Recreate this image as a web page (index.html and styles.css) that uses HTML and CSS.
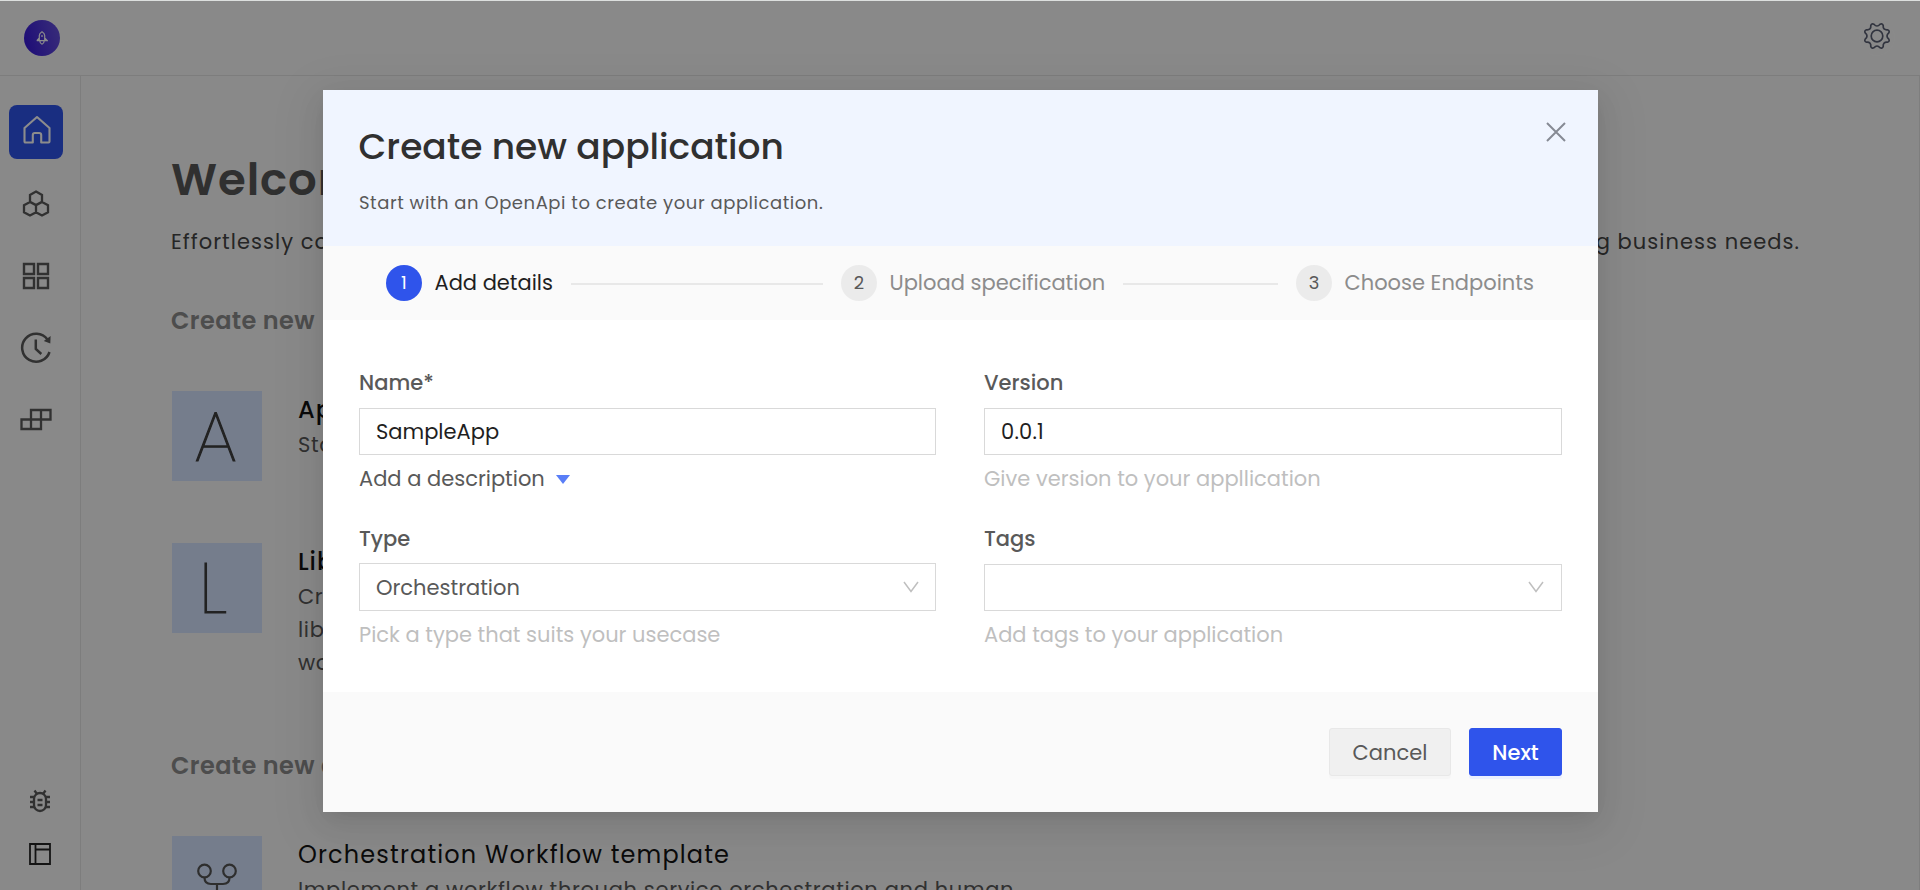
FILE: index.html
```html
<!DOCTYPE html>
<html lang="en">
<head>
<meta charset="utf-8">
<title>Create new application</title>
<link rel="stylesheet" href="styles.css">
</head>
<body>
<div class="app">
  <header class="topbar">
    <div class="brand">
      <svg width="12" height="14" viewBox="0 0 12 14" fill="none" stroke="#fff" stroke-width="1.2"><path d="M3.3 9.5V4.6C3.3 2.8 4.5 1.6 6 .8c1.500.8 2.700 2 2.700 3.800v4.900M.8 9.600h10.400L8.700 7M3.300 7 .8 9.600M3.800 10c.1 1.800.9 2.800 2.200 3.200 1.300-.4 2.100-1.400 2.200-3.200M6 4v2"/></svg>
    </div>
    <div class="settings">
      <svg width="28" height="28" viewBox="-14 -14 28 28" fill="none" stroke="#5a5f73" stroke-width="1.700" stroke-linejoin="round"><path d="M11.800 3.050Q13 5.400 10.500 6.200 5.800 5.800 6.200 10.500 5.400 13 3.050 11.800 0 8.200-3.050 11.800-5.400 13-6.200 10.500-5.800 5.800-10.500 6.200-13 5.400-11.800 3.050-8.200 0-11.800-3.050-13-5.400-10.500-6.200-5.800-5.800-6.200-10.500-5.400-13-3.050-11.800 0-8.200 3.050-11.800 5.400-13 6.200-10.500 5.800-5.800 10.500-6.200 13-5.400 11.800-3.050 8.200 0 11.800 3.050Z"/><circle r="5.800"/></svg>
    </div>
  </header>
  <div class="shell">
    <nav class="sidebar">
      <a class="nav-item active"><svg width="30" height="30" viewBox="0 0 30 30" fill="none" stroke="#fff" stroke-width="2.100" stroke-linejoin="round"><path d="M2.500 13 15 2l12.500 11v13.500q0 1-1 1h-7.300V20q0-2-2-2h-4.400q-2 0-2 2v7.500H3.500q-1 0-1-1Z"/></svg></a>
      <a class="nav-item"><svg width="28" height="28" viewBox="0 0 28 28" fill="none" stroke="#5a5a5a" stroke-width="2.300"><path d="m14 1.500 6 3.400v6.800L14 15l-6-3.300V4.900ZM8 12l6 3.300v6.900l-6 3.300-6-3.300v-6.900ZM20 12l6 3.300v6.900l-6 3.300-6-3.300v-6.900Z"/></svg></a>
      <a class="nav-item"><svg width="28" height="28" viewBox="0 0 28 28" fill="none" stroke="#5a5a5a" stroke-width="2.400"><path d="M2 2h10v10H2ZM16 2h10v10H16ZM2 16h10v10H2ZM16 16h10v10H16Z"/></svg></a>
      <a class="nav-item"><svg width="32" height="32" viewBox="0 0 32 32" fill="none" stroke="#5a5a5a" stroke-width="2.500"><path d="M27.500 7.500A14 14 0 1 0 29.500 20M15.800 7.500V17l5.500 5"/><path d="m30.600 4-.3 7.500-6.500-2.600Z" fill="#5a5a5a" stroke="none"/></svg></a>
      <a class="nav-item"><svg width="32" height="24" viewBox="0 0 32 24" fill="none" stroke="#5a5a5a" stroke-width="2.300"><path d="M11 2h19.500v9.500H11ZM1.500 11.500H21V21H1.500ZM21 2v9.500M11 11.500V21"/></svg></a>
      <div class="nav-foot">
        <svg width="22" height="24" viewBox="0 0 22 24" fill="none" stroke="#5a5a5a" stroke-width="2.300"><rect x="5" y="4" width="12" height="18" rx="6"/><path d="M1 8h4M1 13h4M1 18h4M17 8h4M17 13h4M17 18h4M8.500 11h5M8.500 16h5M8 5 5.500 1.500M14 5l2.500-3.500"/></svg>
        <svg width="22" height="22" viewBox="0 0 22 22" fill="none" stroke="#262626" stroke-width="1.800"><path d="M1 1h20v20H1ZM6.500 1v20M6.500 6.500H21"/></svg>
      </div>
    </nav>
    <main class="content">
      <h1 class="welcome">Welcome</h1>
      <p class="intro"><span class="intro-start">Effortlessly compose</span><span class="intro-end">evolving business needs.</span></p>
      <h2 class="section first">Create new</h2>
      <section class="card">
        <div class="tile"><span class="letter">A</span></div>
        <div class="card-text"><h3>App</h3><p>Start</p></div>
      </section>
      <section class="card card-library">
        <div class="tile"><span class="letter letter-l">L</span></div>
        <div class="card-text"><h3>Lib</h3><p>Cre<br>lib<br>wo</p></div>
      </section>
      <h2 class="section second">Create new application</h2>
      <section class="card template">
        <div class="tile tile-flow"><svg width="42" height="60" viewBox="0 0 42 60" fill="none" stroke="#555" stroke-width="2.200"><circle cx="8.500" cy="8" r="6.300"/><circle cx="33.500" cy="8" r="6.300"/><path d="M8.500 14.500q0 6.500 6.500 6.500h12q6.500 0 6.500-6.500M21 21v18"/><circle cx="21" cy="46" r="6.300"/></svg></div>
        <div class="card-text"><h3>Orchestration Workflow template</h3><p>Implement a workflow through service orchestration and human</p></div>
      </section>
    </main>
  </div>
</div>
<div class="mask">
  <div class="modal" role="dialog">
    <header class="modal-head">
      <div><h2 class="modal-title">Create new application</h2>
      <p class="modal-sub">Start with an OpenApi to create your application.</p></div>
      <svg class="close" width="20" height="20" viewBox="0 0 20 20" stroke="#868a94" stroke-width="2"><path d="m1 1 18 18M19 1 1 19"/></svg>
    </header>
    <div class="steps">
      <div class="step current"><span class="dot">1</span><span class="step-name">Add details</span><i class="line"></i></div>
      <div class="step"><span class="dot">2</span><span class="step-name">Upload specification</span><i class="line"></i></div>
      <div class="step last"><span class="dot">3</span><span class="step-name">Choose Endpoints</span></div>
    </div>
    <div class="form">
      <div class="field">
        <label>Name*</label>
        <div class="control">SampleApp</div>
        <div class="describe">Add a description<i class="caret"></i></div>
      </div>
      <div class="field">
        <label>Version</label>
        <div class="control version">0.0.1</div>
        <div class="help">Give version to your appllication</div>
      </div>
      <div class="field">
        <label>Type</label>
        <div class="control select tall"><span class="value">Orchestration</span><svg class="up" width="16" height="12" viewBox="0 0 16 12" fill="none" stroke="#bfbfbf" stroke-width="1.500"><path d="m1 1 7 9.500L15 1"/></svg></div>
        <div class="help">Pick a type that suits your usecase</div>
      </div>
      <div class="field">
        <label>Tags</label>
        <div class="control select"><span></span><svg class="up" width="16" height="12" viewBox="0 0 16 12" fill="none" stroke="#bfbfbf" stroke-width="1.500"><path d="m1 1 7 9.500L15 1"/></svg></div>
        <div class="help">Add tags to your application</div>
      </div>
    </div>
    <footer class="modal-foot">
      <button class="btn cancel">Cancel</button>
      <button class="btn next">Next</button>
    </footer>
  </div>
</div>
</body>
</html>
```
FILE: styles.css
```css
* { box-sizing: border-box; }
html, body { height: 100%; overflow: hidden; }
body { margin: 0; background: #fafafa; font-family: Poppins, Inter, "Open Sans", sans-serif; color: #262626; }
h1, h2, h3, p { margin: 0; }
svg { display: block; flex: none; }

.app { height: 890px; display: flex; flex-direction: column; overflow: hidden; border-top: 1px solid #dcdfde; }
.topbar { height: 75px; flex: none; display: flex; justify-content: space-between; align-items: flex-start; padding: 19px 25px 0 24px; border-bottom: 1px solid #e4e4e4; }
.brand { width: 36px; height: 36px; border-radius: 50%; display: flex; align-items: center; justify-content: center; background: linear-gradient(75deg, #3414d8, #6954de); }
.settings { width: 36px; height: 36px; border-radius: 50%; border: 1px solid #fff3; display: flex; justify-content: center; padding-top: 1px; }

.shell { flex: 1; display: flex; min-height: 0; border-right: 1px solid #e6e6e6; }
.sidebar { width: 81px; flex: none; border-right: 1px solid #e4e4e4; padding: 29px 0 25px 9px; display: flex; flex-direction: column; gap: 18px; }
.nav-item { width: 54px; height: 54px; display: flex; align-items: center; justify-content: center; border-radius: 8px; }
.active { background: #2f54eb; padding: 0 0 4px 1px; }
.nav-foot { margin-top: auto; padding-left: 20px; display: flex; flex-direction: column; gap: 30px; }

.content { flex: 1; min-width: 0; padding: 74px 119px 0 91px; overflow: hidden; white-space: nowrap; }
.welcome { font-size: 45px; font-weight: 600; line-height: 60px; letter-spacing: .9px; margin-left: -1px; color: #585858; }
.intro { margin: 17px 0 0 -1px; font-size: 21px; line-height: 30px; letter-spacing: 1.04px; color: #454545; display: flex; justify-content: space-between; }
.section { font-size: 24px; font-weight: 600; line-height: 30px; letter-spacing: .4px; color: #8c8c8c; }
.first { margin: 49px 0 55px -1px; }
.second { margin: 72px 0 55px -1px; }
.card { display: flex; gap: 36px; }
.card-library { margin-top: 62px; }
.card-text { padding-top: 4px; }
.card h3 { font-size: 24px; font-weight: 500; line-height: 30px; letter-spacing: .95px; color: #141414; }
.template h3 { font-weight: 400; letter-spacing: 1.15px; }
.card p { margin-top: 3px; font-size: 21px; line-height: 33px; letter-spacing: .65px; color: #595959; }
.tile { width: 90px; height: 90px; flex: none; background: #d6e4ff; display: flex; justify-content: center; }
.tile-flow { padding-top: 27px; }
.letter { font-size: 71px; font-weight: 200; line-height: 91px; color: #3f3f3f; -webkit-text-stroke: 1.2px #3f3f3f; transform: translateX(-1.5px); }
.letter-l { transform: translateX(-4px); }

.mask { position: absolute; inset: 1px 0 0 0; background: rgba(0, 0, 0, .45); display: flex; justify-content: center; align-items: flex-start; padding: 89px 0 0 1px; }
.modal { width: 1275px; background: #fff; box-shadow: 0 6px 16px -8px rgba(0,0,0,.1), 0 9px 28px rgba(0,0,0,.08), 0 12px 48px 16px rgba(0,0,0,.04); }
.modal-head { height: 156px; padding: 33px 32px 0 36px; background: #f0f5ff; display: flex; justify-content: space-between; }
.modal-title { font-size: 36px; font-weight: 500; line-height: 48px; margin-left: -.5px; color: #303030; }
.modal-sub { margin-top: 20px; font-size: 18px; line-height: 24px; letter-spacing: .54px; color: #595959; }
.close { margin-top: -1px; }

.steps { height: 74px; background: #fafafa; padding: 0 0 0 63px; display: flex; align-items: center; font-size: 21px; color: #8c8c8c; }
.step { width: 455px; flex: none; display: flex; align-items: center; line-height: 36px; white-space: nowrap; }
.last { width: auto; }
.current { color: #1f1f1f; }
.dot { width: 36px; height: 36px; flex: none; border-radius: 50%; background: #ebebeb; color: #595959; font-size: 18px; text-align: center; margin-right: 12.5px; }
.current .dot { background: #2f54eb; color: #fff; }
.line { flex: 1; height: 2px; background: #e8e8e8; margin: 2px 18px 0 17.5px; }

.form { height: 372px; padding: 48px 36px 0; display: grid; grid-template-columns: 577px 578px; gap: 30px 48px; grid-auto-rows: 126px; font-size: 21px; line-height: 30px; }
.field { display: flex; flex-direction: column; }
label { font-weight: 500; color: #595959; }
.control { margin: 10px 0 9px; height: 47px; border: 1px solid #d9d9d9; padding: 0 17px 0 16px; display: flex; align-items: center; color: #1f1f1f; }
.version { letter-spacing: .2px; }
.select { justify-content: space-between; color: #595959; }
.tall { margin-top: 9px; height: 48px; padding-right: 16px; }
.value { padding-top: 1px; }
.up { margin-top: -1px; }
.describe { display: flex; align-items: center; gap: 11px; color: #595959; }
.caret { border: 7.5px solid transparent; border-top: 9px solid #597ef7; border-bottom: 0; }
.help { color: #bfbfbf; }

.modal-foot { height: 120px; background: #fafafa; padding: 36px 36px 0; display: flex; justify-content: flex-end; gap: 18px; }
.btn { height: 48px; padding: 1px 0 0; font: 400 21px/46px Poppins, Inter, "Open Sans", sans-serif; border-radius: 3px; border: 1px solid #e8e8e8; }
.cancel { width: 122px; background: #f0f0f0; color: #595959; box-shadow: 0 3px 0 rgba(0,0,0,.015); }
.next { width: 93px; background: #2f54eb; border-color: #2f54eb; color: #fff; font-weight: 500; box-shadow: 0 3px 0 #ebf0ff; }
```
